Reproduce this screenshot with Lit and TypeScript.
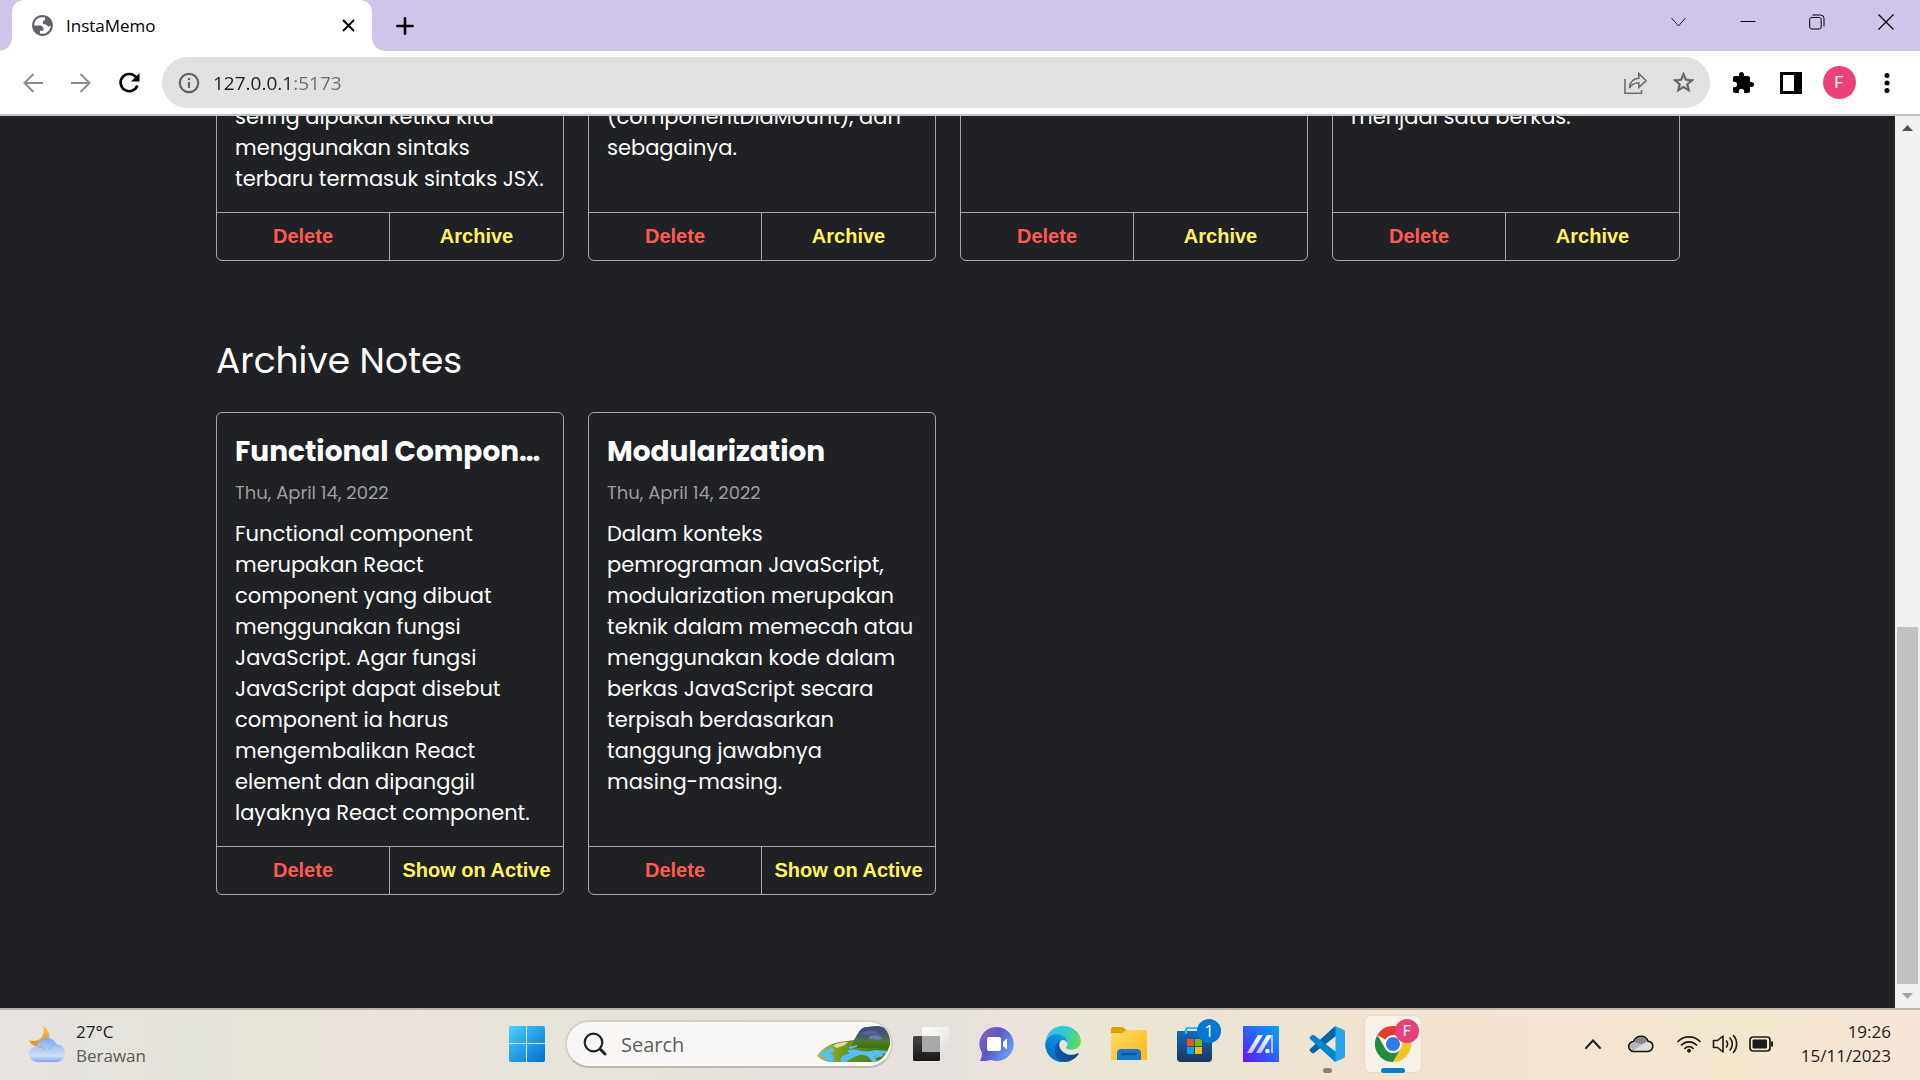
import { LitElement, html, css } from "lit";
import { customElement, property } from "lit/decorators.js";

interface Note {
  title?: string;
  date?: string;
  body: string;
}

const ACTIVE_NOTES: Note[] = [
  { body: "sering dipakai ketika kita\nmenggunakan sintaks\nterbaru termasuk sintaks JSX." },
  { body: "(componentDidMount), dan\nsebagainya." },
  { body: "" },
  { body: "menjadi satu berkas." },
];

const ARCHIVED_NOTES: Note[] = [
  {
    title: "Functional Compon…",
    date: "Thu, April 14, 2022",
    body:
      "Functional component\nmerupakan React\ncomponent yang dibuat\nmenggunakan fungsi\nJavaScript. Agar fungsi\nJavaScript dapat disebut\ncomponent ia harus\nmengembalikan React\nelement dan dipanggil\nlayaknya React component.",
  },
  {
    title: "Modularization",
    date: "Thu, April 14, 2022",
    body:
      "Dalam konteks\npemrograman JavaScript,\nmodularization merupakan\nteknik dalam memecah atau\nmenggunakan kode dalam\nberkas JavaScript secara\nterpisah berdasarkan\ntanggung jawabnya\nmasing-masing.",
  },
];

const reset = css`
  *,
  *::before,
  *::after {
    box-sizing: border-box;
  }
  button,
  input {
    margin: 0;
    padding: 0;
    border: 0;
    background: none;
    font: inherit;
    color: inherit;
  }
  svg {
    display: block;
  }
`;

@customElement("note-card")
export class NoteCard extends LitElement {
  @property({ attribute: false }) note!: Note;
  @property() action = "Archive";

  static styles = [
    reset,
    css`
      :host {
        display: block;
        min-width: 0;
      }
      .card {
        display: flex;
        flex-direction: column;
        height: 100%;
        border: 1px solid #a9a9aa;
        border-radius: 6px;
        overflow: hidden;
      }
      .content {
        flex: 1;
        padding: 18px;
        color: #fff;
      }
      .title {
        margin: 0;
        font-size: 28px;
        line-height: 42px;
        font-weight: 700;
        white-space: nowrap;
      }
      .date {
        margin: 6px 0 12px;
        font-size: 18px;
        line-height: 27px;
        color: #9d9d9e;
      }
      .body {
        margin: 0;
        font-size: 21px;
        line-height: 31px;
        white-space: pre;
      }
      .actions {
        display: grid;
        grid-template-columns: 1fr 1fr;
        border-top: 1px solid #a9a9aa;
      }
      .action {
        height: 47px;
        padding-bottom: 2px;
        font: 700 20px/24px "Liberation Sans", Arial, sans-serif;
        color: #fff35c;
        white-space: nowrap;
      }
      .delete {
        color: #ff5a4f;
        border-right: 1px solid #a9a9aa;
      }
    `,
  ];

  render() {
    const { title, date, body } = this.note;
    return html`<article class="card">
      <div class="content">
        ${title ? html`<h3 class="title">${title}</h3>` : null}
        ${date ? html`<p class="date">${date}</p>` : null}
        <p class="body">${body}</p>
      </div>
      <div class="actions">
        <button class="action delete">Delete</button>
        <button class="action">${this.action}</button>
      </div>
    </article>`;
  }
}

@customElement("browser-chrome")
export class BrowserChrome extends LitElement {
  static styles = [
    reset,
    css`
      :host {
        display: block;
        font-family: "Open Sans", "Noto Sans", sans-serif;
        color: #000;
      }
      .strip {
        display: flex;
        align-items: stretch;
        height: 51px;
        padding-left: 12px;
        background: #d0c4e8;
      }
      .tab {
        position: relative;
        display: flex;
        align-items: center;
        gap: 11px;
        width: 360px;
        padding: 0 15px 0 18px;
        background: #fff;
        border-radius: 12px 12px 0 0;
        font-size: 17px;
      }
      .tab::before,
      .tab::after {
        content: "";
        position: absolute;
        bottom: 0;
        width: 12px;
        height: 12px;
      }
      .tab::before {
        left: -12px;
        background: radial-gradient(circle at 0 0, #d0c4e8 11px, #fff 12px);
      }
      .tab::after {
        right: -12px;
        background: radial-gradient(circle at 100% 0, #d0c4e8 11px, #fff 12px);
      }
      .name {
        flex: 1;
      }
      .add {
        padding: 0 24px;
      }
      .window {
        display: flex;
        margin-left: auto;
      }
      .window button {
        width: 69px;
        height: 44px;
        display: grid;
        place-items: center;
      }
      .toolbar {
        display: flex;
        align-items: center;
        height: 65px;
        padding: 0 9px;
        background: #fff;
        border-bottom: 2px solid #c3c3c4;
      }
      .tool {
        width: 48px;
        height: 48px;
        display: grid;
        place-items: center;
        flex: none;
      }
      .omnibox {
        flex: 1;
        display: flex;
        align-items: center;
        height: 51px;
        margin: 0 9px;
        padding: 0 3px;
        border-radius: 26px;
        background: #e1e1e1;
      }
      .url {
        flex: 1;
        min-width: 0;
        font-size: 19px;
        line-height: 28px;
        outline: none;
        background: linear-gradient(90deg, #1f2023 81px, #6c6d70 81px);
        -webkit-background-clip: text;
        background-clip: text;
        color: transparent;
      }
      .avatar {
        width: 33px;
        height: 33px;
        border-radius: 50%;
        background: #ec407a;
        color: #fff;
        font: 17px/33px Roboto, sans-serif;
        text-align: center;
      }
    `,
  ];

  render() {
    return html`
      <div class="strip">
        <div class="tab">
          <svg width="25" height="25" viewBox="0 0 24 24" fill="#5f6368" fill-rule="evenodd">
            <path d="M12 2C6.480 2 2 6.480 2 12s4.480 10 10 10 10-4.480 10-10S17.520 2 12 2zM4 12h4.400c3.410.02 4.940 1.730 4.570 5.130H9.490v2.470c1.400.5 2.600.5 4 .2 3.500-.8 6.100-3.700 6.500-7.600-1.400 1-3.100 1-3.900-.4-.5-.9-1.400-.4-2.500-.9-1.200-.5-1.700-1.600-1.100-2.800.4-.9 1.400-1 1.800-1.600.4-.7 0-1.400.3-2.100C9 2.800 4 6.500 4 12z" />
          </svg>
          <span class="name">InstaMemo</span>
          <button aria-label="Close tab">
            <svg width="17" height="17" viewBox="0 0 17 17" stroke="#000" stroke-width="2">
              <path d="M3 3l11 11M14 3L3 14" />
            </svg>
          </button>
        </div>
        <button class="add" aria-label="New tab">
          <svg width="18" height="18" viewBox="0 0 18 18" stroke="#000" stroke-width="2.600" stroke-linecap="round">
            <path d="M9 1.300v15.400M1.300 9h15.400" />
          </svg>
        </button>
        <div class="window">
          <button aria-label="Search tabs">
            <svg width="17" height="16" viewBox="0 0 17 16" fill="none" stroke="#222"><path d="M1.500 4l7 8 7-8" /></svg>
          </button>
          <button aria-label="Minimize">
            <svg width="16" height="16" viewBox="0 0 16 16" stroke="#000"><path d="M.5 7.500h15" /></svg>
          </button>
          <button aria-label="Restore">
            <svg width="16" height="16" viewBox="0 0 16 16" fill="none" stroke="#000">
              <rect x=".7" y="3.500" width="11.500" height="11.500" rx="2" />
              <path d="M3.500 1h8a3.500 3.500 0 013.500 3.500v8" />
            </svg>
          </button>
          <button aria-label="Close">
            <svg width="16" height="16" viewBox="0 0 16 16" stroke="#000" stroke-width="1.200"><path d="M.5.5l15 15M15.500.5l-15 15" /></svg>
          </button>
        </div>
      </div>
      <div class="toolbar">
        <button class="tool" aria-label="Back">
          <svg width="20" height="20" viewBox="0 0 20 20" fill="none" stroke="#8c8c8c" stroke-width="2"><path d="M20 10H2M10.500 1L1.500 10l9 9" /></svg>
        </button>
        <button class="tool" aria-label="Forward">
          <svg width="20" height="20" viewBox="0 0 20 20" fill="none" stroke="#8c8c8c" stroke-width="2"><path d="M0 10h18M9.500 1l9 9-9 9" /></svg>
        </button>
        <button class="tool" aria-label="Reload">
          <svg width="22" height="22" viewBox="0 0 22 22" fill="none" stroke="#000" stroke-width="2.600">
            <path d="M18.200 5.600A8.600 8.600 0 1 0 19.300 13.500" />
            <path d="M21.500 1v8.500H13z" fill="#000" stroke="none" />
          </svg>
        </button>
        <div class="omnibox">
          <button class="tool" aria-label="Site information">
            <svg width="22" height="22" viewBox="0 0 22 22" fill="none" stroke="#5f6368" stroke-width="2.200">
              <circle cx="11" cy="11" r="9.200" /><path d="M11 10v6M11 6v2.300" />
            </svg>
          </button>
          <input class="url" type="text" aria-label="Address" value="127.0.0.1:5173" />
          <button class="tool" aria-label="Share">
            <svg width="24" height="24" viewBox="0 0 24 24" fill="none" stroke="#6b6e72" stroke-width="1.600">
              <path d="M2 8v14.200h16.500V19M6.500 17c.4-6 3.500-9.500 9.300-9.800V2.500L23 9.800l-7.200 6.600v-4.600c-4.300.1-7.300 1.700-9.300 5.200z" />
            </svg>
          </button>
          <button class="tool" aria-label="Bookmark this tab">
            <svg width="25" height="25" viewBox="0 0 24 24" fill="#5f6368" stroke="#5f6368" stroke-width=".5">
              <path d="M22 9.240l-7.190-.62L12 2 9.190 8.630 2 9.240l5.460 4.730L5.820 21 12 17.270 18.180 21l-1.630-7.030L22 9.240zM12 15.400l-3.760 2.270 1-4.280-3.320-2.880 4.380-.38L12 6.100l1.710 4.040 4.380.38-3.320 2.880 1 4.280L12 15.400z" />
            </svg>
          </button>
        </div>
        <button class="tool" aria-label="Extensions">
          <svg width="24" height="24" viewBox="0 0 24 24">
            <path d="M20.500 11H19V7c0-1.100-.9-2-2-2h-4V3.500C13 2.120 11.880 1 10.500 1S8 2.120 8 3.500V5H4c-1.100 0-1.990.9-1.990 2v3.800H3.500c1.490 0 2.700 1.210 2.700 2.700s-1.210 2.700-2.700 2.700H2V20c0 1.100.9 2 2 2h3.800v-1.500c0-1.490 1.210-2.700 2.700-2.700 1.490 0 2.700 1.210 2.700 2.700V22H17c1.100 0 2-.9 2-2v-4h1.500c1.380 0 2.500-1.120 2.500-2.500S21.880 11 20.500 11z" />
          </svg>
        </button>
        <button class="tool" aria-label="Side panel">
          <svg width="22" height="22" viewBox="0 0 22 22"><path d="M0 0h22v22H0z" /><path d="M3 3h11v16H3z" fill="#fff" /></svg>
        </button>
        <button class="tool" aria-label="Profile"><span class="avatar">F</span></button>
        <button class="tool" aria-label="Menu">
          <svg width="6" height="22" viewBox="0 0 6 22"><circle cx="3" cy="3.500" r="2.500" /><circle cx="3" cy="11" r="2.500" /><circle cx="3" cy="18.500" r="2.500" /></svg>
        </button>
      </div>
    `;
  }
}

@customElement("task-bar")
export class TaskBar extends LitElement {
  static styles = [
    reset,
    css`
      :host {
        box-sizing: border-box;
        display: grid;
        grid-template-columns: 1fr auto 1fr;
        align-items: center;
        height: 72px;
        padding-bottom: 2px;
        border-top: 2px solid #b9b5ab;
        background: linear-gradient(90deg, #e5e2e0 0%, #e4e3da 10%, #e6e4d8 15%, #ebe1dd 20%, #e6e4d9 28%, #e5e1dc 40%, #e6e1dc 50%, #ede2de 53%, #e9e6d3 56%, #ece4d3 64%, #f2e3cf 72%, #f5e5d5 82%, #f3e7cd 90%, #f5e5d8 100%);
        font-family: "Open Sans", "Noto Sans", sans-serif;
        color: #1c1c1c;
      }
      .weather {
        display: flex;
        align-items: center;
        gap: 11px;
        padding-left: 29px;
        justify-self: start;
        font-size: 17px;
        line-height: 24px;
        text-align: left;
      }
      .lines {
        display: grid;
      }
      .muted {
        color: #5c5b58;
      }
      .apps {
        display: flex;
        align-items: center;
        gap: 10px;
      }
      .app {
        position: relative;
        width: 56px;
        height: 56px;
        display: grid;
        place-items: center;
      }
      .focused {
        border-radius: 6px;
        background: #f8f1e7;
        box-shadow: 0 0 0 1px #e6dccd;
      }
      .running::after {
        content: "";
        position: absolute;
        bottom: -1px;
        left: 24px;
        width: 9px;
        height: 5px;
        border-radius: 3px;
        background: #8a8378;
      }
      .focused::after {
        left: 16px;
        width: 24px;
        background: #0a78d4;
      }
      .badge {
        position: absolute;
        top: 3px;
        right: 2px;
        width: 24px;
        height: 24px;
        border-radius: 50%;
        background: #0078d4;
        color: #fff;
        font-size: 17px;
        line-height: 24px;
        text-align: center;
      }
      .profile {
        background: #e8417a;
        font: 15px/24px Roboto, sans-serif;
      }
      .search {
        display: flex;
        align-items: center;
        gap: 14px;
        width: 328px;
        height: 48px;
        padding: 0 0 0 16px;
        border: 2px solid #d5d2ca;
        border-bottom-color: #bdbab3;
        border-radius: 24px;
        background: #f8f7f5;
        font-size: 20px;
      }
      .query {
        flex: 1;
        min-width: 0;
        outline: none;
      }
      .query::placeholder {
        color: #5f5e5c;
        opacity: 1;
      }
      .tray {
        display: flex;
        align-items: center;
        justify-self: end;
        padding-right: 29px;
      }
      .icon {
        width: 36px;
        display: grid;
        place-items: center;
      }
      .wide {
        width: 48px;
      }
      .status {
        display: flex;
        align-items: center;
        margin: 0 22px 0 6px;
      }
      .clock {
        display: grid;
        font-size: 17px;
        line-height: 24px;
        text-align: right;
      }
    `,
  ];

  render() {
    return html`
      <button class="weather">
        <svg width="36" height="36" viewBox="0 0 36 36">
          <defs>
            <linearGradient id="moon" x1="0" y1="0" x2="0" y2="1"><stop stop-color="#f9c646" /><stop offset="1" stop-color="#f0861c" /></linearGradient>
            <linearGradient id="cloud" x1="0" y1="0" x2="0" y2="1"><stop stop-color="#7ea6ee" /><stop offset=".75" stop-color="#cfe0f6" /><stop offset="1" stop-color="#7fa2ee" /></linearGradient>
          </defs>
          <path d="M14 0c6 4 8 10 5 15-3 5-10 7-15 4-2-1-3-3-4-5 5 2 10 1 13-3 2-4 2-7 1-11z" fill="url(#moon)" />
          <path d="M8 36a8 8 0 01-8-7.500C0 24 3.500 21 7.500 21 9 15.500 13 12 18 12c4.500 0 8 2.500 9.500 6.200 5-.2 8.500 4 8.500 8.800 0 5-3.500 9-8.500 9z" fill="url(#cloud)" />
          <path d="M8 21c4-.4 7 1 9 4M27 18c-4 .3-6 3-6.500 6" fill="none" stroke="#7b9fe6" opacity=".6" />
        </svg>
        <span class="lines"><span>27°C</span><span class="muted">Berawan</span></span>
      </button>

      <nav class="apps">
        <button class="app" aria-label="Start">
          <svg width="36" height="36" viewBox="0 0 36 36">
            <defs><linearGradient id="win" x1="0" y1="0" x2="1" y2="1"><stop stop-color="#4bd0fc" /><stop offset="1" stop-color="#006fd0" /></linearGradient></defs>
            <path d="M2 0h15v17H0V2a2 2 0 012-2zM18 0h16a2 2 0 012 2v15H18zM0 18h17v18H2a2 2 0 01-2-2zM18 18h18v16a2 2 0 01-2 2H18z" fill="url(#win)" />
          </svg>
        </button>
        <label class="search">
          <svg width="24" height="24" viewBox="0 0 24 24" fill="none" stroke="#222" stroke-linecap="round">
            <circle cx="10.500" cy="10.500" r="8.800" stroke-width="2.200" /><path d="M17.500 17.500l4.500 4.500" stroke-width="3" />
          </svg>
          <input class="query" type="text" placeholder="Search" aria-label="Search" />
          <svg width="74" height="36" viewBox="0 0 74 36">
            <defs>
              <clipPath id="scene"><path d="M0 30c4-7 12-12 22-14 6-1 10-1 15-2 4-5 5-13 14-13 7-1 14-1 16 1 7 7 8 17 2 25-3 6-8 9-14 9H12C7 35 3 33 0 30z" /></clipPath>
              <linearGradient id="hill" x1="0" y1="0" x2="0" y2="1"><stop stop-color="#3f4c78" /><stop offset=".45" stop-color="#46587c" /><stop offset=".7" stop-color="#4d7c25" /><stop offset="1" stop-color="#3f720c" /></linearGradient>
              <linearGradient id="land" x1="0" y1="0" x2="1" y2="0"><stop stop-color="#c2b94a" /><stop offset=".35" stop-color="#6c9a20" /><stop offset="1" stop-color="#3f720c" /></linearGradient>
            </defs>
            <g clip-path="url(#scene)">
              <path d="M0 0h74v36H0z" fill="url(#land)" />
              <path d="M34 22c4-8 6-21 16-22h24v22z" fill="url(#hill)" />
              <path d="M44 8c4-4 9-4 14-3l9 7c-6-4-12-5-17-3z" fill="#5b6793" />
              <path d="M51 12c4-4 10-4 15 1-5 1-10 1-15-1z" fill="#6f80a8" />
              <path d="M16 20c4-3 9-4 15-4l-3 3-8 3z" fill="#efd4a0" />
              <path d="M2 29c4-4 8-6 13-7 3 2 2 4-2 5 4 2 4 5 3 9h-5c-1-3-4-5-9-7zM24 36c-2-4 2-7 7-8 2-1 1-2-1-3 5-3 10-1 15 0 5 1 9 0 13-1l14 1-1 2c-5 0-9 3-14 3 1 2 3 4 3 6h-5c-2-4-4-6-8-7-6-1-8 2-14 4-2 1-3 2-3 3z" fill="#55c0f8" />
              <path d="M32 22l8-2M58 31l8-2" fill="none" stroke="#55c0f8" stroke-width="2" />
            </g>
          </svg>
        </label>
        <button class="app" aria-label="Task view">
          <svg width="36" height="34" viewBox="0 0 36 34">
            <defs><linearGradient id="dark" x1="0" y1="0" x2="0" y2="1"><stop stop-color="#484644" /><stop offset="1" stop-color="#161616" /></linearGradient>
            <linearGradient id="light" x1="0" y1="0" x2="1" y2="1"><stop stop-color="#fff" /><stop offset="1" stop-color="#dfdfdf" /></linearGradient></defs>
            <rect y="9" width="27" height="25" rx="1.500" fill="url(#dark)" /><rect x="9" width="27" height="25" rx="1.500" fill="url(#light)" />
            <path d="M9 9h18v16H9z" fill="#a9a8a7" />
          </svg>
        </button>
        <button class="app" aria-label="Chat">
          <svg width="36" height="36" viewBox="0 0 36 36">
            <defs><linearGradient id="chat" x1="0" y1="0" x2="1" y2=".6"><stop stop-color="#9d62b0" /><stop offset=".5" stop-color="#5a58c8" /><stop offset="1" stop-color="#6b9cf2" /></linearGradient></defs>
            <path d="M18 1a17 17 0 11-6 33c-3 1-7 1-11 1 1-2 2-5 2-8A17 17 0 0118 1z" fill="url(#chat)" />
            <rect x="8" y="11" width="14" height="14" rx="2" fill="#fff" /><path d="M24 16l4-3.500v11L24 20z" fill="#fff" />
          </svg>
        </button>
        <button class="app" aria-label="Edge">
          <svg width="36" height="36" viewBox="0 0 256 259">
            <defs>
              <linearGradient id="e1" x1="0" y1="0" x2="1" y2="0"><stop stop-color="#0c59a4" /><stop offset="1" stop-color="#114a8b" /></linearGradient>
              <linearGradient id="e2" x1=".8" y1="0" x2=".3" y2="1"><stop stop-color="#1b9de2" /><stop offset=".5" stop-color="#0b7fd0" /><stop offset="1" stop-color="#0a6cbd" /></linearGradient>
              <linearGradient id="e3" x1="0" y1=".4" x2="1" y2=".6"><stop stop-color="#35c1f1" /><stop offset=".5" stop-color="#2fc7d0" /><stop offset="1" stop-color="#62dc55" /></linearGradient>
            </defs>
            <path fill="url(#e1)" d="M235.680 195.460a93.730 93.730 0 0 1-10.540 4.710 101.870 101.870 0 0 1-35.900 6.460c-47.320 0-88.540-32.550-88.540-74.320A31.480 31.480 0 0 1 117.130 105c-42.800 1.800-53.800 46.400-53.800 72.530 0 73.880 68.090 81.370 82.760 81.370 7.910 0 19.840-2.300 27-4.560l1.310-.44a128.340 128.340 0 0 0 66.600-52.800 4 4 0 0 0-5.320-5.640Z" />
            <path fill="url(#e2)" d="M105.730 246.420a79.200 79.200 0 0 1-22.740-21.340 80.720 80.720 0 0 1 29.530-120c3.130-1.470 8.450-4.050 15.540-4a32.350 32.350 0 0 1 25.700 13 31.880 31.880 0 0 1 6.360 18.660c0-.21 24.460-79.600-80-79.600-43.900 0-80 41.660-80 78.210a130.150 130.150 0 0 0 12.110 56 128 128 0 0 0 156.380 67.110 75.550 75.550 0 0 1-62.780-8Z" />
            <path fill="url(#e3)" d="M152.330 148.860c-.81 1.050-3.300 2.500-3.300 5.660 0 2.610 1.700 5.120 4.720 7.230 14.380 10 41.490 8.680 41.560 8.680a59.560 59.560 0 0 0 30.270-8.350 61.380 61.380 0 0 0 30.430-52.880c.26-22.410-8-37.310-11.340-43.910C223.460 23.840 177.720 0 128 0A128 128 0 0 0 0 126.200c.48-36.540 36.800-66.050 80-66.050 3.500 0 23.460.34 42 10.070 16.340 8.580 24.900 18.940 30.850 29.210 6.180 10.670 7.280 24.150 7.280 29.520s-2.740 13.330-7.800 19.910Z" />
          </svg>
        </button>
        <button class="app" aria-label="File Explorer">
          <svg width="36" height="34" viewBox="0 0 36 34">
            <defs><linearGradient id="folder" x1="0" y1="0" x2="1" y2="1"><stop stop-color="#ffdb68" /><stop offset="1" stop-color="#fdb714" /></linearGradient></defs>
            <path d="M0 8V2a2 2 0 012-2h9c2 0 3 3 5 3h19v5z" fill="#e0a000" />
            <path d="M0 6h11c2 0 3-3 5-3h20v30H0z" fill="url(#folder)" />
            <path d="M6 33v-7a4 4 0 014-4h16a4 4 0 014 4v7z" fill="#1377cc" /><path d="M11 27h14" stroke="#0b4f9c" stroke-width="2" stroke-linecap="round" />
          </svg>
        </button>
        <button class="app" aria-label="Microsoft Store">
          <svg width="36" height="36" viewBox="0 0 36 36">
            <defs><linearGradient id="store" x1="0" y1="0" x2="0" y2="1"><stop stop-color="#0f6cb8" /><stop offset="1" stop-color="#1e3560" /></linearGradient></defs>
            <path d="M9 8V3.500A1.500 1.500 0 0110.500 2h13" fill="none" stroke="#2fbdf0" stroke-width="2.200" />
            <path d="M0 5h35v27a4 4 0 01-4 4H4a4 4 0 01-4-4z" fill="url(#store)" />
            <path d="M9 8V4" stroke="#2fbdf0" stroke-width="2.200" />
            <path d="M10 13h7v7h-7z" fill="#f25022" /><path d="M18 13h7v7h-7z" fill="#7fba00" /><path d="M10 21h7v7h-7z" fill="#00a4ef" /><path d="M18 21h7v7h-7z" fill="#ffb900" />
          </svg>
          <span class="badge">1</span>
        </button>
        <button class="app" aria-label="MyASUS">
          <svg width="36" height="36" viewBox="0 0 36 36">
            <defs><linearGradient id="asus" x1="0" y1="1" x2="1" y2="0"><stop stop-color="#6a10ff" /><stop offset=".5" stop-color="#2a60ff" /><stop offset="1" stop-color="#00a8ff" /></linearGradient>
            <linearGradient id="bar" x1="0" y1="0" x2="0" y2="1"><stop stop-color="#fff" /><stop offset="1" stop-color="#c4c2fb" /></linearGradient></defs>
            <path d="M0 0h36v36H0z" fill="url(#asus)" />
            <path d="M15 9h5L9 27H4zM24 9h6v2h-2L18 27h-5z" fill="url(#bar)" />
            <path d="M28 9h2v18h-2z" fill="#b7c7ff" /><circle cx="24.500" cy="25" r="2.200" fill="#fff" />
          </svg>
        </button>
        <button class="app running" aria-label="Visual Studio Code">
          <svg width="36" height="36" viewBox="0 0 36 36">
            <path d="M1 11l2-2q1-.6 2 0l22 17v9.500q-1 .3-2-.5L1 13q-1-1 0-2z" fill="#0065a9" transform="matrix(1 0 0 -1 0 36)" />
            <path d="M1 11l2-2q1-.6 2 0l22 17v9.500q-1 .3-2-.5L1 13q-1-1 0-2z" fill="#0087cf" />
            <path d="M25 1q1-1 2-.7l7.500 3.400Q36 4.500 36 6v24q0 1.500-1.500 2.300L27 35.700q-1 .3-2-.7 1.500.5 1.500-1.500v-31Q26.500.5 25 1z" fill="#25a4f0" />
          </svg>
        </button>
        <button class="app focused running" aria-label="Chrome">
          <svg width="36" height="36" viewBox="0 0 36 36">
            <path d="M18 18L2.410 9A18 18 0 0133.590 9z" fill="#e33b2e" />
            <path d="M18 9h15.590A18 18 0 0118 36l7.800-13.500z" fill="#fcc31e" />
            <path d="M2.410 9l7.800 13.500A9 9 0 0025.800 22.500L18 36A18 18 0 012.410 9z" fill="#1f8e3e" />
            <circle cx="18" cy="18" r="9" fill="#fff" /><circle cx="18" cy="18" r="7" fill="#2f7bee" />
          </svg>
          <span class="badge profile">F</span>
        </button>
      </nav>

      <div class="tray">
        <button class="icon wide" aria-label="Show hidden icons">
          <svg width="16" height="10" viewBox="0 0 16 10" fill="none" stroke="#1c1c1c" stroke-width="1.900" stroke-linecap="round"><path d="M1 9l7-7.500L15 9" /></svg>
        </button>
        <button class="icon wide" aria-label="OneDrive">
          <svg width="26" height="18" viewBox="0 0 26 18">
            <path d="M6 16.500a5 5 0 01-.5-10C7 3 10 1.200 13 1.200c3.500 0 6 2 7 5 3 .3 4.800 2.500 4.800 5s-2 5.300-5 5.300z" fill="#dedede" stroke="#111" stroke-width="1.600" />
            <path d="M6 7.500C8 3.500 10 2 13 2c3 0 5 2 6 4.500l-5 3z" fill="#858585" /><path d="M2 12c0-3 2-5 5-4.800L14 10l-9 5.500z" fill="#b5b5b5" />
          </svg>
        </button>
        <div class="status">
          <button class="icon" aria-label="Network">
            <svg width="24" height="18" viewBox="0 0 24 18" fill="none" stroke="#1c1c1c" stroke-width="1.700" stroke-linecap="round">
              <path d="M1 6.500a15.500 15.500 0 0122 0M4.500 10a10.600 10.600 0 0115 0M8 13.300a5.700 5.700 0 018 0" /><circle cx="12" cy="15.700" r="1.500" fill="#1c1c1c" stroke-width="1" />
            </svg>
          </button>
          <button class="icon" aria-label="Volume">
            <svg width="26" height="20" viewBox="0 0 26 20" fill="none" stroke="#1c1c1c" stroke-width="1.600" stroke-linecap="round" stroke-linejoin="round">
              <path d="M1.500 6.500h4L11 2v16l-5.500-4.500h-4zM14.500 7a5 5 0 010 6M18 4a9 9 0 010 12M21.500 1.500a13 13 0 010 17" />
            </svg>
          </button>
          <button class="icon" aria-label="Battery">
            <svg width="24" height="16" viewBox="0 0 24 16"><rect x="1" y="1" width="20" height="14" rx="3" fill="none" stroke="#1c1c1c" stroke-width="1.700" /><rect x="3.500" y="3.500" width="14.500" height="9" rx="1" fill="#1c1c1c" /><path d="M22 5.500h2v5h-2z" fill="#1c1c1c" /></svg>
          </button>
        </div>
        <button class="clock"><span>19:26</span><span>15/11/2023</span></button>
      </div>
    `;
  }
}

@customElement("app-root")
export class AppRoot extends LitElement {
  static styles = [
    reset,
    css`
      :host {
        display: flex;
        flex-direction: column;
        height: 100vh;
        background: #202124;
      }
      .view {
        flex: 1;
        min-height: 0;
        display: flex;
      }
      .page {
        flex: 1;
        min-width: 0;
        display: flex;
        flex-direction: column;
        justify-content: flex-end;
        overflow: hidden;
        padding: 0 215px 113px 216px;
        font-family: Poppins, Inter, "Open Sans", sans-serif;
        color: #fff;
      }
      .notes {
        flex: none;
        display: grid;
        grid-template-columns: repeat(4, 1fr);
        gap: 24px;
      }
      .heading {
        margin: 73px 0 24px;
        font-size: 36px;
        line-height: 54px;
        font-weight: 400;
      }
      .scrollbar {
        display: flex;
        flex-direction: column;
        width: 25px;
        padding: 0 2px;
        background: #f1f1f1;
      }
      .arrow {
        height: 24px;
        display: grid;
        place-items: center;
      }
      .space {
        flex: 487;
      }
      .thumb {
        flex: 357;
        background: #c1c1c1;
      }
    `,
  ];

  render() {
    return html`
      <browser-chrome></browser-chrome>
      <div class="view">
        <main class="page">
          <section class="notes">
            ${ACTIVE_NOTES.map((note) => html`<note-card .note=${note} action="Archive"></note-card>`)}
          </section>
          <h2 class="heading">Archive Notes</h2>
          <section class="notes">
            ${ARCHIVED_NOTES.map((note) => html`<note-card .note=${note} action="Show on Active"></note-card>`)}
          </section>
        </main>
        <div class="scrollbar">
          <div class="arrow"><svg width="11" height="6" viewBox="0 0 11 6" fill="#505050"><path d="M0 6l5.500-6L11 6z" /></svg></div>
          <div class="space"></div>
          <div class="thumb"></div>
          <div class="arrow"><svg width="11" height="6" viewBox="0 0 11 6" fill="#a3a3a3"><path d="M0 0l5.500 6L11 0z" /></svg></div>
        </div>
      </div>
      <task-bar></task-bar>
    `;
  }
}
